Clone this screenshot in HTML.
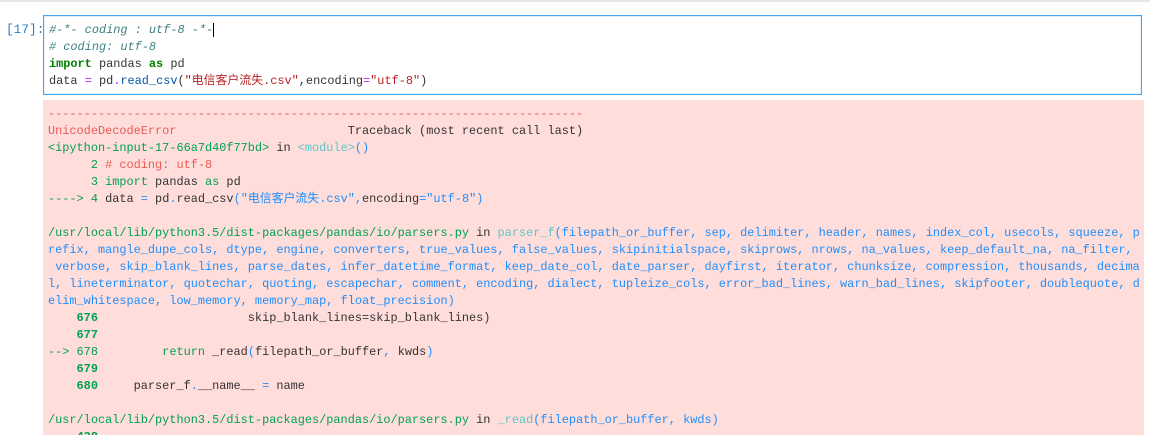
<!DOCTYPE html>
<html><head><meta charset="utf-8"><style>
body{margin:0;width:1150px;height:435px;overflow:hidden;background:#fff;position:relative;font-family:"Liberation Mono","Noto Sans CJK SC",monospace;font-size:11.9px;}
.top{position:absolute;left:0;top:0;width:1150px;height:2px;background:#e6e6e6}
.prompt{position:absolute;left:6px;top:21px;color:#307fc1;line-height:17px;font-size:12.8px}
.inp{position:absolute;left:43px;top:15px;width:1097px;height:78px;border:1px solid #42a5f5;box-shadow:inset 0 0 0 1px #e3f0fb;background:#fff}
pre{margin:0;font:inherit;line-height:17px;white-space:pre}
.inp pre{position:absolute;left:5px;top:6px;color:#333}
.out{position:absolute;left:43px;top:100px;width:1101px;height:335px;background:#ffdddb;overflow:hidden}
.out pre{position:absolute;left:5px;top:6px;color:#333}
.c{color:#408080;font-style:italic}.k{color:#008000;font-weight:bold}.o{color:#aa22ff}.s{color:#ba2121}.f{color:#0055aa}
.r{color:#e75c58}.g{color:#00a250}.cy{color:#60c6c8}.b{color:#208ffb}.gb{color:#00a250;font-weight:bold}
</style></head><body>
<div class="top"></div>
<div class="prompt">[17]:</div>
<div class="inp"><pre><span class="c">#-*- coding : utf-8 -*-</span><span style="border-left:1px solid #000"></span>
<span class="c"># coding: utf-8</span>
<span class="k">import</span> pandas <span class="k">as</span> pd
data <span class="o">=</span> pd<span class="o">.</span><span class="f">read_csv</span>(<span class="s">"电信客户流失.csv"</span>,encoding<span class="o">=</span><span class="s">"utf-8"</span>)</pre></div>
<div class="out"><pre><span class="r">---------------------------------------------------------------------------</span>
<span class="r">UnicodeDecodeError</span>                        Traceback (most recent call last)
<span class="g">&lt;ipython-input-17-66a7d40f77bd&gt;</span> in <span class="cy">&lt;module&gt;</span><span class="b">()</span>
<span class="g">      2</span> <span class="r"># coding: utf-8</span>
<span class="g">      3</span> <span class="g">import</span> pandas <span class="g">as</span> pd
<span class="g">----&gt; 4</span> data <span class="b">=</span> pd<span class="b">.</span>read_csv<span class="b">(</span><span class="b">"电信客户流失.csv"</span><span class="b">,</span>encoding<span class="b">=</span><span class="b">"utf-8"</span><span class="b">)</span>

<span class="g">/usr/local/lib/python3.5/dist-packages/pandas/io/parsers.py</span> in <span class="cy">parser_f</span><span class="b">(filepath_or_buffer, sep, delimiter, header, names, index_col, usecols, squeeze, p</span>
<span class="b">refix, mangle_dupe_cols, dtype, engine, converters, true_values, false_values, skipinitialspace, skiprows, nrows, na_values, keep_default_na, na_filter,</span>
<span class="b"> verbose, skip_blank_lines, parse_dates, infer_datetime_format, keep_date_col, date_parser, dayfirst, iterator, chunksize, compression, thousands, decima</span>
<span class="b">l, lineterminator, quotechar, quoting, escapechar, comment, encoding, dialect, tupleize_cols, error_bad_lines, warn_bad_lines, skipfooter, doublequote, d</span>
<span class="b">elim_whitespace, low_memory, memory_map, float_precision)</span>
<span class="gb">    676</span>                     skip_blank_lines=skip_blank_lines)
<span class="gb">    677</span>
<span class="g">--&gt; 678</span> <span class="g">        return</span> _read<span class="b">(</span>filepath_or_buffer<span class="b">,</span> kwds<span class="b">)</span>
<span class="gb">    679</span>
<span class="gb">    680</span>     parser_f<span class="b">.</span>__name__ <span class="b">=</span> name

<span class="g">/usr/local/lib/python3.5/dist-packages/pandas/io/parsers.py</span> in <span class="cy">_read</span><span class="b">(filepath_or_buffer, kwds)</span>
<span class="gb">    438</span></pre></div>
</body></html>
